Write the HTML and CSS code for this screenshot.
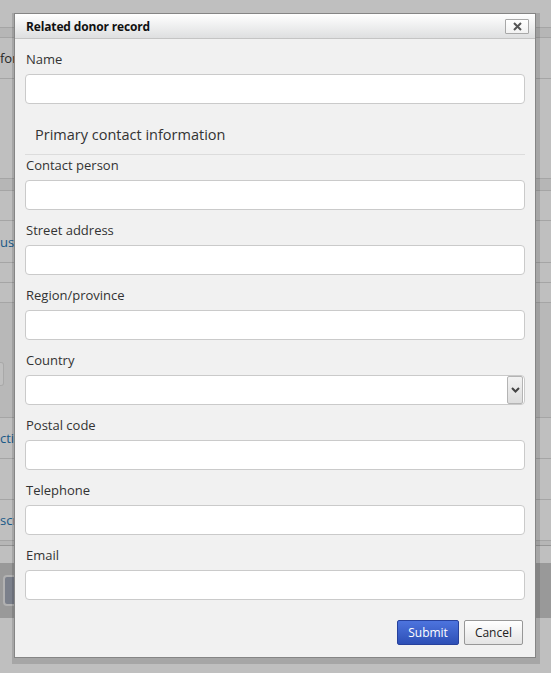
FILE: index.html
```html
<!DOCTYPE html>
<html>
<head>
<meta charset="utf-8">
<title>Related donor record</title>
<link rel="stylesheet" href="styles.css">
</head>
<body>
<div class="page">
  <div class="row h27"></div>
  <div class="row h9 tint"></div>
  <div class="row h40 txt"><span class="dark">for</span></div>
  <div class="row h99"></div>
  <div class="row h11 tint"></div>
  <div class="row h29"></div>
  <div class="row h41 txt"><span class="link">usf</span></div>
  <div class="row h19"></div>
  <div class="row h19"></div>
  <div class="row h114 tint2"><div class="stub"></div></div>
  <div class="row h40 txt"><span class="link">ctiv</span></div>
  <div class="row h40"></div>
  <div class="row h40 txt"><span class="link">scr</span></div>
  <div class="row h4 tint thick"></div>
  <div class="row h17"></div>
  <div class="bar"><div class="bar-btn"></div></div>
</div>

<div class="overlay"></div>

<div class="dialog">
  <div class="titlebar">
    <span class="title">Related donor record</span>
    <button class="close" type="button" aria-label="Close">
      <svg width="9" height="9" viewBox="0 0 9 9"><path d="M1 1 L8 8 M8 1 L1 8" stroke="#555" stroke-width="2" fill="none"/></svg>
    </button>
  </div>
  <div class="body">
    <div class="field">
      <label>Name</label>
      <input class="input" type="text">
    </div>
    <div class="section">Primary contact information</div>
    <div class="field first">
      <label>Contact person</label>
      <input class="input" type="text">
    </div>
    <div class="field">
      <label>Street address</label>
      <input class="input" type="text">
    </div>
    <div class="field">
      <label>Region/province</label>
      <input class="input" type="text">
    </div>
    <div class="field">
      <label>Country</label>
      <div class="select-wrap">
        <select class="input select"><option></option></select>
        <span class="select-arrow">
          <svg width="9" height="6" viewBox="0 0 9 6"><path d="M1 1 L4.5 4.5 L8 1" stroke="#444" stroke-width="2" fill="none"/></svg>
        </span>
      </div>
    </div>
    <div class="field">
      <label>Postal code</label>
      <input class="input" type="text">
    </div>
    <div class="field">
      <label>Telephone</label>
      <input class="input" type="text">
    </div>
    <div class="field">
      <label>Email</label>
      <input class="input" type="text">
    </div>
    <div class="buttons">
      <button class="btn primary" type="button">Submit</button>
      <button class="btn" type="button">Cancel</button>
    </div>
  </div>
</div>
</body>
</html>
```

FILE: styles.css
```css
html, body {
  margin: 0;
  padding: 0;
}
body {
  width: 551px;
  height: 673px;
  overflow: hidden;
  background: #fff;
  font-family: "Open Sans", "DejaVu Sans", sans-serif;
}

/* background page */
.page {
  display: flex;
  flex-direction: column;
}
.row {
  border-bottom: 1px solid #ddd;
  font-size: 13px;
  white-space: nowrap;
}
.h4 { height: 4px; }
.h9 { height: 9px; }
.h11 { height: 11px; }
.h17 { height: 17px; border-bottom: none; }
.h19 { height: 19px; }
.h27 { height: 27px; }
.h29 { height: 29px; }
.h40 { height: 40px; }
.h41 { height: 41px; }
.h99 { height: 99px; }
.h114 { height: 114px; }
.tint { background: #f3f3f3; }
.tint2 { background: #f6f6f6; }
.thick { border-bottom: 1px solid #c8c8c8; }
.txt {
  display: flex;
  align-items: center;
}
.dark { color: #333; }
.link { color: #2678b5; }
.stub {
  width: 3px;
  height: 22px;
  margin-top: 59px;
  border: 1px solid #e2e2e2;
  border-left: none;
  border-radius: 0 3px 3px 0;
  background: #fff;
}
.bar {
  height: 55px;
  background: #cdcdcd;
  display: flex;
  align-items: center;
  padding-left: 3px;
}
.bar-btn {
  width: 80px;
  height: 27px;
  border: 2px solid #ececec;
  border-radius: 4px;
  background: #a5abba;
}

.overlay {
  position: absolute;
  left: 0;
  top: 0;
  width: 551px;
  height: 673px;
  background: rgba(0, 0, 0, 0.25);
}

/* dialog */
.dialog {
  position: absolute;
  left: 14px;
  top: 13px;
  width: 520px;
  border: 1px solid #858585;
  background: #f1f1f1;
  box-shadow: 1px 3px 0 3px rgba(0, 0, 0, 0.13);
}
.titlebar {
  position: relative;
  height: 24px;
  border-bottom: 1px solid #c4c4c4;
  background: linear-gradient(#ffffff, #dedfe0);
  padding: 0 11px;
  display: flex;
  align-items: center;
}
.title {
  font-size: 12px;
  font-weight: bold;
  color: #111;
  letter-spacing: -0.15px;
}
.close {
  position: absolute;
  right: 6px;
  top: 5px;
  width: 24px;
  height: 15px;
  padding: 0;
  border: 1px solid #a8a8a8;
  border-radius: 1px;
  background: linear-gradient(#ffffff, #f2f2f2);
  display: flex;
  align-items: center;
  justify-content: center;
}
.body {
  padding: 10px 10px 12px;
}
.field + .field {
  margin-top: 10px;
}
.field label {
  display: block;
  font-size: 13px;
  line-height: 20px;
  color: #333;
  padding-left: 1px;
  margin-bottom: 5px;
}
.input {
  display: block;
  box-sizing: border-box;
  width: 100%;
  height: 30px;
  margin: 0;
  border: 1px solid #cacaca;
  border-radius: 4px;
  background: #fff;
  font-family: inherit;
  font-size: 13px;
  outline: none;
}
.section {
  margin-top: 10px;
  padding: 10px 10px 8px;
  font-size: 14.5px;
  line-height: 22px;
  color: #333;
  border-bottom: 1px solid #dcdcdc;
}
.select-wrap {
  position: relative;
}
.select {
  appearance: none;
  -webkit-appearance: none;
}
.select-arrow {
  position: absolute;
  right: 2px;
  top: 1px;
  bottom: 1px;
  width: 16px;
  border: 1px solid #b4b4b4;
  border-radius: 2px;
  background: linear-gradient(#f2f2f2, #dddddd);
  display: flex;
  align-items: center;
  justify-content: center;
  box-sizing: border-box;
}
.buttons {
  margin-top: 20px;
  display: flex;
  justify-content: flex-end;
  gap: 5px;
  padding-right: 2px;
}
.btn {
  height: 25px;
  padding: 0 10px;
  font-family: "Open Sans", "DejaVu Sans", sans-serif;
  font-size: 12px;
  color: #222;
  border: 1px solid #979797;
  border-radius: 2px;
  background: linear-gradient(#ffffff, #e4e4e4);
}
.btn.primary {
  color: #fff;
  border-color: #27419c;
  background: linear-gradient(#4d74de, #2d4fb6);
}
```
